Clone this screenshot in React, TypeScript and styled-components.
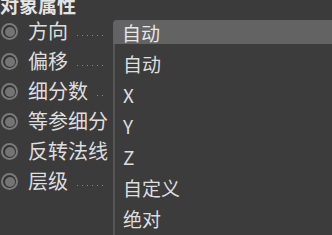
import React from 'react'
import styled, {createGlobalStyle} from 'styled-components'

const GlobalStyle = createGlobalStyle`
  html, body {
    margin: 0;
    padding: 0;
    background: #3b3b3b;
    overflow: hidden;
  }
  body {
    font-family: "Noto Sans CJK SC", "Noto Sans", sans-serif;
    color: #dcdcdc;
  }
`

const Panel = styled.section`
  position: relative;
  width: 332px;
  height: 235px;
  overflow: hidden;
  background: #3b3b3b;
`

const Title = styled.h2`
  margin: -9px 0 0 0;
  height: 25px;
  font-size: 19px;
  font-weight: bold;
  line-height: 27px;
  color: #e4e4e4;
`

const Rows = styled.div`
  display: flex;
  flex-direction: column;
`

const Row = styled.div`
  display: grid;
  grid-template-columns: 113px 1fr;
  height: 30px;
  align-items: center;
`

const LabelCell = styled.div`
  display: flex;
  align-items: center;
  height: 100%;
  min-width: 0;
`

const Radio = styled.span`
  position: relative;
  flex: none;
  width: 17px;
  height: 17px;
  margin: 1px 10px 0 1px;
  border-radius: 50%;
  background: #7a7a7a;

  &::before {
    content: '';
    position: absolute;
    left: 2px;
    top: 2px;
    width: 13px;
    height: 13px;
    border-radius: 50%;
    background: #323232;
  }

  &::after {
    content: '';
    position: absolute;
    left: 3.5px;
    top: 3.5px;
    width: 10px;
    height: 10px;
    border-radius: 50%;
    background: #747474;
  }
`

const Label = styled.span`
  flex: none;
  font-size: 20px;
  line-height: 30px;
  white-space: nowrap;
  color: #dedede;
`

const Leader = styled.span`
  flex: 1;
  height: 1px;
  margin: 9px 6px 0 9px;
  background-image: linear-gradient(to right, #8a8a8a 1px, transparent 1px);
  background-size: 5px 1px;
  background-repeat: repeat-x;
`

const Field = styled.div`
  align-self: start;
  height: 24px;
  margin-top: 4px;
  padding-left: 9px;
  background: #636363;
  border-radius: 4px 0 0 0;
  font-size: 19px;
  line-height: 25px;
  color: #e6e6e6;
`

const Menu = styled.ul`
  position: absolute;
  left: 113px;
  top: 44px;
  right: 0;
  bottom: 0;
  margin: 0;
  padding: 4px 0 0 0;
  list-style: none;
  background: #3c3c3c;
  border-left: 2px solid #565656;
`

const MenuItem = styled.li`
  height: 31px;
  padding-left: 8px;
  font-size: 19px;
  line-height: 31px;
  color: #dedede;
`

const rows = [
    {label: '方向', leader: true},
    {label: '偏移', leader: true},
    {label: '细分数', leader: true},
    {label: '等参细分', leader: false},
    {label: '反转法线', leader: false},
    {label: '层级', leader: true},
]

const options = ['自动', 'X', 'Y', 'Z', '自定义', '绝对']

export default function App() {
    return (
        <Panel>
            <GlobalStyle/>
            <Title>对象属性</Title>
            <Rows>
                {rows.map((r, i) => (
                    <Row key={r.label}>
                        <LabelCell>
                            <Radio/>
                            <Label>{r.label}</Label>
                            {r.leader && <Leader/>}
                        </LabelCell>
                        {i === 0 && <Field>自动</Field>}
                    </Row>
                ))}
            </Rows>
            <Menu>
                {options.map(o => <MenuItem key={o}>{o}</MenuItem>)}
            </Menu>
        </Panel>
    )
}
